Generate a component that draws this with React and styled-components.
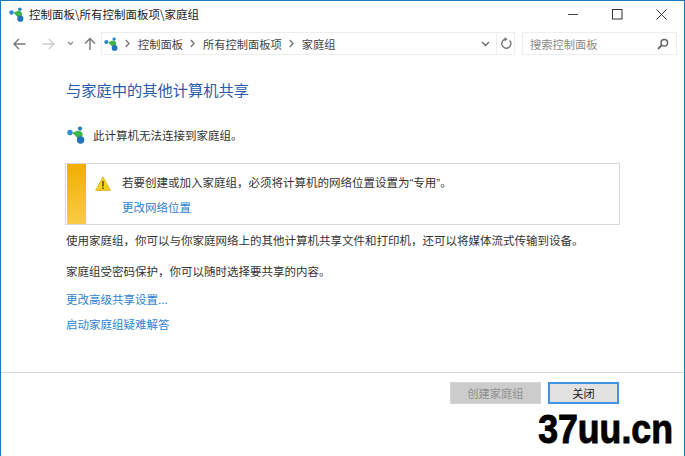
import React from "react";
import styled, { createGlobalStyle } from "styled-components";

const cjk = `"Noto Sans CJK SC", "Liberation Sans", sans-serif`;

const Global = createGlobalStyle`
  html, body { margin: 0; padding: 0; background: #fff; }
  body { font-family: ${cjk}; font-size: 11.5px; color: #333; }
  * { box-sizing: border-box; }
`;

function GroupIcon({ size = 14 }) {
  return (
    <svg width={size} height={size} viewBox="0 0 18 18">
      <circle cx="3" cy="6.5" r="2.7" fill="#2b8ed6" />
      <circle cx="13" cy="2.6" r="2.1" fill="#1f7fc4" />
      <path d="M5 7 L11 4.5 L15.5 9 L12 12.5 Z" fill="#3fb54a" />
      <circle cx="12" cy="8.5" r="3.6" fill="#3fb54a" />
      <circle cx="13.6" cy="14" r="3.7" fill="#1f74bb" />
    </svg>
  );
}

function Crumbs() {
  const chevron = (
    <ChevronIcon width="5" height="9" viewBox="0 0 5 9">
      <path d="M0.8 1 L4 4.5 L0.8 8" fill="none" stroke="#777" strokeWidth="1.4" />
    </ChevronIcon>
  );
  return (
    <>
      <GroupIcon size={14} />
      {chevron}
      <Crumb>控制面板</Crumb>
      {chevron}
      <Crumb>所有控制面板项</Crumb>
      {chevron}
      <Crumb>家庭组</Crumb>
    </>
  );
}

export default function App() {
  return (
    <>
      <Global />
      <Window>
        <TitleBar>
          <GroupIcon size={15} />
          <TitleText>控制面板\所有控制面板项\家庭组</TitleText>
          <WindowControls>
            <svg width="11" height="11" viewBox="0 0 11 11">
              <path d="M0 5.5 H10" stroke="#444" strokeWidth="1" />
            </svg>
            <svg width="11" height="11" viewBox="0 0 11 11">
              <rect x="0.5" y="0.5" width="9.5" height="9.5" fill="none" stroke="#333" strokeWidth="1" />
            </svg>
            <svg width="11" height="11" viewBox="0 0 11 11">
              <path d="M0.5 0.5 L10.5 10.5 M10.5 0.5 L0.5 10.5" stroke="#333" strokeWidth="1" />
            </svg>
          </WindowControls>
        </TitleBar>

        <Toolbar>
          <NavButtons>
            <svg width="13" height="12" viewBox="0 0 13 12">
              <path d="M12.5 6 H1.5 M6 1 L1 6 L6 11" fill="none" stroke="#777" strokeWidth="1.4" />
            </svg>
            <ForwardIcon width="13" height="12" viewBox="0 0 13 12">
              <path d="M0.5 6 H11.5 M7 1 L12 6 L7 11" fill="none" stroke="#ccc" strokeWidth="1.4" />
            </ForwardIcon>
            <DropIcon width="7" height="5" viewBox="0 0 7 5">
              <path d="M1 1 L3.5 3.5 L6 1" fill="none" stroke="#888" strokeWidth="1.2" />
            </DropIcon>
            <UpIcon width="12" height="13" viewBox="0 0 12 13">
              <path d="M6 13 V2 M1 6.5 L6 1.5 L11 6.5" fill="none" stroke="#777" strokeWidth="1.4" />
            </UpIcon>
          </NavButtons>
          <AddressBar>
            <Crumbs />
            <AddressEnd>
              <svg width="9" height="6" viewBox="0 0 9 6">
                <path d="M1 1 L4.5 4.5 L8 1" fill="none" stroke="#666" strokeWidth="1.3" />
              </svg>
            </AddressEnd>
            <RefreshBox>
              <svg width="12" height="13" viewBox="0 0 12 13">
                <path d="M9.6 3.4 A4.6 4.6 0 1 1 5.2 2.2" fill="none" stroke="#777" strokeWidth="1.4" />
                <path d="M4.6 0 L7.6 2.2 L4.6 4.4 Z" fill="#777" />
              </svg>
            </RefreshBox>
          </AddressBar>
          <SearchBox>
            <span>搜索控制面板</span>
            <svg width="12" height="12" viewBox="0 0 12 12">
              <circle cx="7.3" cy="4.7" r="3.3" fill="none" stroke="#666" strokeWidth="1.5" />
              <path d="M4.8 7.2 L1 11" stroke="#666" strokeWidth="1.8" />
            </svg>
          </SearchBox>
        </Toolbar>

        <Content>
          <Heading>与家庭中的其他计算机共享</Heading>
          <StatusRow>
            <GroupIcon size={18} />
            <span>此计算机无法连接到家庭组。</span>
          </StatusRow>
          <Notice>
            <NoticeStripe />
            <NoticeIcon>
              <svg width="16" height="15" viewBox="0 0 16 15">
                <path d="M8 0.8 L15.4 14.4 H0.6 Z" fill="#f7d21c" stroke="#d9a514" strokeWidth="0.7" />
                <path d="M8 5 V10.5 M8 11.5 V13" stroke="#333" strokeWidth="1.3" />
              </svg>
            </NoticeIcon>
            <NoticeBody>
              <div>
                若要创建或加入家庭组，必须将计算机的网络位置设置为<Quote>“</Quote>专用<Quote>”</Quote>。
              </div>
              <NoticeLink>更改网络位置</NoticeLink>
            </NoticeBody>
          </Notice>
          <Para>使用家庭组，你可以与你家庭网络上的其他计算机共享文件和打印机，还可以将媒体流式传输到设备。</Para>
          <Para>家庭组受密码保护，你可以随时选择要共享的内容。</Para>
          <Links>
            <LinkLine>更改高级共享设置...</LinkLine>
            <LinkLine>启动家庭组疑难解答</LinkLine>
          </Links>
        </Content>

        <Footer>
          <Button disabled>创建家庭组</Button>
          <Button $primary>关闭</Button>
        </Footer>
      </Window>
      <Watermark>37uu.cn</Watermark>
    </>
  );
}

const Window = styled.div`
  width: 685px;
  height: 456px;
  display: flex;
  flex-direction: column;
  background: #fff;
  border-top: 1px solid #1c76b8;
  border-left: 1px solid #1c76b8;
  border-right: 1px solid #1c76b8;
`;

const TitleBar = styled.div`
  height: 26px;
  display: flex;
  align-items: center;
  padding-left: 8px;
  flex-shrink: 0;
`;

const TitleText = styled.span`
  margin-left: 5px;
  font-size: 11.5px;
  color: #222;
`;

const WindowControls = styled.div`
  margin-left: auto;
  display: flex;
  align-items: center;
  gap: 33px;
  padding-right: 17px;
`;

const Toolbar = styled.div`
  height: 23px;
  margin-top: 5px;
  display: flex;
  align-items: stretch;
  padding-left: 12px;
  flex-shrink: 0;
`;

const NavButtons = styled.div`
  width: 88px;
  display: flex;
  align-items: center;
`;

const ForwardIcon = styled.svg`
  margin-left: 16px;
`;

const DropIcon = styled.svg`
  margin-left: 12px;
`;

const UpIcon = styled.svg`
  margin-left: 10px;
`;

const AddressBar = styled.div`
  width: 414px;
  display: flex;
  align-items: center;
  padding-left: 2px;
  border: 1px solid #eee;
  font-size: 11.25px;
`;

const ChevronIcon = styled.svg`
  margin: 0 8px 0 7px;
  flex-shrink: 0;
`;

const Crumb = styled.span`
  color: #444;
`;

const AddressEnd = styled.div`
  margin-left: auto;
  display: flex;
  align-items: center;
  padding-right: 6px;
`;

const RefreshBox = styled.div`
  width: 18px;
  align-self: stretch;
  display: flex;
  align-items: center;
  justify-content: center;
  border-left: 1px solid #eee;
`;

const SearchBox = styled.div`
  width: 155px;
  margin-left: 7px;
  display: flex;
  align-items: center;
  justify-content: space-between;
  padding: 0 7px;
  border: 1px solid #eee;
  color: #8a8a8a;
  font-size: 11.25px;
`;

const Content = styled.div`
  flex: 1;
  padding: 24px 64px 0 65px;
`;

const Heading = styled.h1`
  margin: 0;
  font-size: 15.25px;
  font-weight: 400;
  line-height: 20px;
  color: #2a5ba8;
`;

const StatusRow = styled.div`
  margin-top: 26px;
  height: 20px;
  display: flex;
  align-items: center;
  gap: 8px;
  svg {
    margin-left: 1px;
  }
`;

const Notice = styled.div`
  margin-top: 18px;
  margin-left: -1px;
  width: 555px;
  height: 62px;
  display: flex;
  border: 1px solid #d9d9d9;
`;

const NoticeStripe = styled.div`
  width: 19px;
  margin-left: 1px;
  background: linear-gradient(#f0ae00, #fccb45);
`;

const NoticeIcon = styled.div`
  width: 36px;
  padding: 12px 0 0 9px;
`;

const NoticeBody = styled.div`
  padding-top: 9px;
  line-height: 18px;
`;

const Quote = styled.span`
  font-family: "Liberation Sans", sans-serif;
`;

const NoticeLink = styled.div`
  margin-top: 6px;
  color: #2f7fcf;
`;

const Para = styled.p`
  margin: 0;
  padding-top: 6px;
  height: 31px;
  line-height: 18px;
`;

const Links = styled.div`
  padding-top: 3px;
`;

const LinkLine = styled.div`
  height: 25px;
  line-height: 18px;
  color: #2f82d2;
`;

const Footer = styled.div`
  height: 84px;
  flex-shrink: 0;
  border-top: 1px solid #d9d9d9;
  display: flex;
  justify-content: flex-end;
  align-items: flex-start;
  gap: 7px;
  padding: 9px 65px 0 0;
`;

const Button = styled.button`
  height: 22px;
  width: ${(p) => (p.$primary ? "71px" : "91px")};
  font-family: inherit;
  font-size: 11.25px;
  padding: 0;
  color: ${(p) => (p.disabled ? "#8f8f8f" : "#222")};
  background: ${(p) => (p.disabled ? "#cccccc" : "#e1e1e1")};
  border: ${(p) => (p.$primary ? "2px solid #3f94e6" : "1px solid #d4d4d4")};
`;

const Watermark = styled.div`
  position: absolute;
  right: 12px;
  bottom: 2px;
  font-family: "Liberation Sans", sans-serif;
  font-weight: 700;
  font-size: 41px;
  line-height: 50px;
  color: #000;
  -webkit-text-stroke: 1px #000;
  transform: scaleX(0.87);
  transform-origin: right center;
`;
